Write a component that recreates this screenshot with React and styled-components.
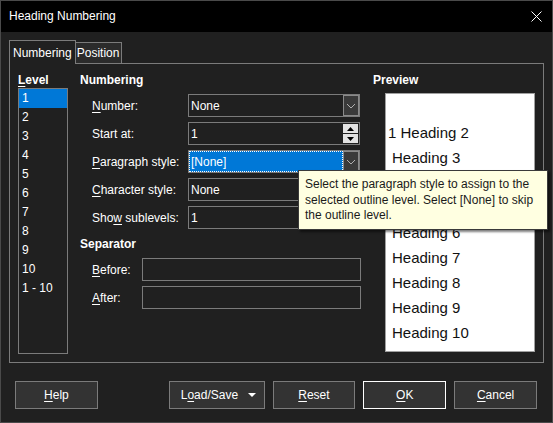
import styled, { createGlobalStyle } from "styled-components"

const Global = createGlobalStyle`
  body {
    margin: 0;
    background: #202020;
    font-family: "Segoe UI", "Liberation Sans", Arial, sans-serif;
  }
`;

const levels = ["1", "2", "3", "4", "5", "6", "7", "8", "9", "10", "1 - 10"];
const headings = ["", "1 Heading 2", "Heading 3", "Heading 4", "Heading 5", "Heading 6", "Heading 7", "Heading 8", "Heading 9", "Heading 10"];

const Chevron = () => (
  <svg width="10" height="6" viewBox="0 0 10 6">
    <path d="M1 1 L5 5 L9 1" fill="none" stroke="#b0b0b0" strokeWidth="1" />
  </svg>
);

const App = () => {
  return (
    <Window>
      <Global />
      <TitleBar>
        <span>Heading Numbering</span>
        <svg width="11" height="11" viewBox="0 0 11 11">
          <path d="M0.5 0.5 L10.5 10.5 M10.5 0.5 L0.5 10.5" stroke="#fff" strokeWidth="1" />
        </svg>
      </TitleBar>

      <TabBar>
        <Tab $active>Numbering</Tab>
        <Tab>Position</Tab>
      </TabBar>

      <Panel>
        <LevelCol>
          <Heading><Key>L</Key>evel</Heading>
          <LevelList>
            {levels.map((l, i) => (
              <LevelItem key={l} $selected={i === 0}>{l}</LevelItem>
            ))}
          </LevelList>
        </LevelCol>

        <MiddleCol>
          <Heading>Numbering</Heading>
          <Rows>
            <FormRow>
              <Label><Key>N</Key>umber:</Label>
              <Combo>
                <ComboText>None</ComboText>
                <DropBtn><Chevron /></DropBtn>
              </Combo>
            </FormRow>
            <FormRow>
              <Label>Start at:</Label>
              <Combo>
                <ComboText>1</ComboText>
                <Spin>
                  <SpinBtn>
                    <svg width="7" height="4" viewBox="0 0 7 4"><path d="M0 4 L3.5 0 L7 4 Z" fill="#000" /></svg>
                  </SpinBtn>
                  <SpinBtn>
                    <svg width="7" height="4" viewBox="0 0 7 4"><path d="M0 0 L3.5 4 L7 0 Z" fill="#000" /></svg>
                  </SpinBtn>
                </Spin>
              </Combo>
            </FormRow>
            <FormRow>
              <Label><Key>P</Key>aragraph style:</Label>
              <Combo>
                <ComboText $selected>[None]</ComboText>
                <DropBtn><Chevron /></DropBtn>
              </Combo>
            </FormRow>
            <FormRow>
              <Label><Key>C</Key>haracter style:</Label>
              <Combo>
                <ComboText>None</ComboText>
                <DropBtn><Chevron /></DropBtn>
              </Combo>
            </FormRow>
            <FormRow>
              <Label>Sho<Key>w</Key> sublevels:</Label>
              <Combo>
                <ComboText>1</ComboText>
              </Combo>
            </FormRow>
          </Rows>

          <Heading $gap>Separator</Heading>
          <Rows>
            <FormRow>
              <Label $narrow><Key>B</Key>efore:</Label>
              <Field />
            </FormRow>
            <FormRow>
              <Label $narrow><Key>A</Key>fter:</Label>
              <Field />
            </FormRow>
          </Rows>
        </MiddleCol>

        <PreviewCol>
          <Heading>Preview</Heading>
          <PreviewBox>
            {headings.map((h, i) => (
              <PreviewLine key={i} $numbered={h.startsWith("1 ")}>{h || "\u00a0"}</PreviewLine>
            ))}
          </PreviewBox>
        </PreviewCol>
      </Panel>

      <ButtonRow>
        <Button><Key>H</Key>elp</Button>
        <Spacer />
        <Button $wide>
          <span>L<Key>o</Key>ad/Save</span>
          <svg width="8" height="4" viewBox="0 0 8 4"><path d="M0 0 L4 4 L8 0 Z" fill="#fff" /></svg>
        </Button>
        <Button><Key>R</Key>eset</Button>
        <Button $default><Key>O</Key>K</Button>
        <Button><Key>C</Key>ancel</Button>
      </ButtonRow>

      <Tooltip>
        Select the paragraph style to assign to the<br />
        selected outline level. Select [None] to skip<br />
        the outline level.
      </Tooltip>
    </Window>
  );
};

export default App;

const Window = styled.div`
  position: relative;
  width: 553px;
  height: 423px;
  box-sizing: border-box;
  border: 1px solid #4a4a4a;
  background: #202020;
  color: #fff;
  font-size: 12px;
  display: flex;
  flex-direction: column;
`;

const TitleBar = styled.div`
  height: 30px;
  background: #000;
  display: flex;
  align-items: center;
  justify-content: space-between;
  padding: 0 10px 1px 8px;
  font-size: 12px;
`;

const TabBar = styled.div`
  display: flex;
  align-items: flex-end;
  margin: 8px 0 0 8px;
  height: 23px;
  position: relative;
  z-index: 1;
`;

const Tab = styled.div`
  box-sizing: border-box;
  height: ${(p) => (p.$active ? "24px" : "21px")};
  margin-bottom: ${(p) => (p.$active ? "-1px" : "0")};
  padding: ${(p) => (p.$active ? "0 3px 0 3px" : "0 2px 0 1px")};
  border: 1px solid #7b7b7b;
  border-bottom: none;
  border-left: ${(p) => (p.$active ? "1px solid #7b7b7b" : "none")};
  background: ${(p) => (p.$active ? "#202020" : "#2b2b2b")};
  display: flex;
  align-items: ${(p) => (p.$active ? "flex-start" : "center")};
  padding-top: ${(p) => (p.$active ? "5px" : "0")};
  line-height: 14px;
`;

const Panel = styled.div`
  box-sizing: border-box;
  height: 300px;
  margin: 0 8px;
  border: 1px solid #7b7b7b;
  display: flex;
  padding: 9px 0 8px 8px;
`;

const Heading = styled.div`
  font-weight: bold;
  line-height: 15px;
  height: 15px;
  margin-top: ${(p) => (p.$gap ? "8px" : "0")};
`;

const Key = styled.span`
  text-decoration: underline;
  text-underline-offset: 2px;
`;

const LevelCol = styled.div`
  width: 50px;
  margin-right: 12px;
  display: flex;
  flex-direction: column;
`;

const LevelList = styled.div`
  flex: 1;
  border: 1px solid #7b7b7b;
`;

const LevelItem = styled.div`
  height: 19px;
  line-height: 19px;
  padding-left: 3px;
  background: ${(p) => (p.$selected ? "#0078d7" : "transparent")};
`;

const MiddleCol = styled.div`
  width: 281px;
  margin-right: 12px;
  display: flex;
  flex-direction: column;
`;

const Rows = styled.div`
  display: flex;
  flex-direction: column;
  gap: 5px;
  margin-top: 6px;
`;

const FormRow = styled.div`
  display: flex;
  align-items: center;
  height: 23px;
  padding-left: 12px;
`;

const Label = styled.div`
  width: ${(p) => (p.$narrow ? "50px" : "96px")};
  flex-shrink: 0;
`;

const Combo = styled.div`
  box-sizing: border-box;
  width: 172px;
  height: 23px;
  border: 1px solid #7b7b7b;
  display: flex;
`;

const ComboText = styled.div`
  flex: 1;
  display: flex;
  align-items: center;
  padding-left: 2px;
  background: ${(p) => (p.$selected ? "#0078d7" : "transparent")};
  outline: ${(p) => (p.$selected ? "1px dotted #fff" : "none")};
  outline-offset: -1px;
`;

const DropBtn = styled.div`
  box-sizing: border-box;
  width: 16px;
  border: 1px solid #8a8a8a;
  background: #3a3a3a;
  display: flex;
  align-items: center;
  justify-content: center;
`;

const Spin = styled.div`
  width: 15px;
  display: flex;
  flex-direction: column;
  gap: 1px;
  padding: 1px 1px 1px 0;
`;

const SpinBtn = styled.div`
  flex: 1;
  background: #e3e3e3;
  display: flex;
  align-items: center;
  justify-content: center;
`;

const Field = styled.div`
  box-sizing: border-box;
  width: 219px;
  height: 23px;
  border: 1px solid #7b7b7b;
`;

const PreviewCol = styled.div`
  display: flex;
  flex-direction: column;
`;

const PreviewBox = styled.div`
  box-sizing: border-box;
  margin: 5px 0 0 12px;
  width: 150px;
  height: 259px;
  background: #fff;
  border: 1px solid #a0a0a0;
  padding-top: 1px;
  overflow: hidden;
`;

const PreviewLine = styled.div`
  height: 25px;
  line-height: 25px;
  font-size: 15px;
  color: #111;
  padding-left: ${(p) => (p.$numbered ? "2px" : "6px")};
  white-space: nowrap;
`;

const ButtonRow = styled.div`
  display: flex;
  gap: 8px;
  margin-top: 18px;
  padding: 0 15px 0 14px;
`;

const Spacer = styled.div`
  width: 55px;
`;

const Button = styled.div`
  box-sizing: border-box;
  width: ${(p) => (p.$wide ? "96px" : "83px")};
  height: 28px;
  background: #333;
  border: 1px solid ${(p) => (p.$default ? "#ffffff" : "#7b7b7b")};
  display: flex;
  align-items: center;
  justify-content: ${(p) => (p.$wide ? "space-between" : "center")};
  padding: ${(p) => (p.$wide ? "0 8px 0 11px" : "0")};
`;

const Tooltip = styled.div`
  position: absolute;
  left: 297px;
  top: 169px;
  width: 250px;
  height: 60px;
  box-sizing: border-box;
  background: #ffffe1;
  color: #1a1a1a;
  border: 1px solid #3a3a3a;
  box-shadow: 2px 2px 2px rgba(0, 0, 0, 0.5);
  padding: 6px 0 0 6px;
  line-height: 15.5px;
  font-size: 12px;
  white-space: nowrap;
`;
